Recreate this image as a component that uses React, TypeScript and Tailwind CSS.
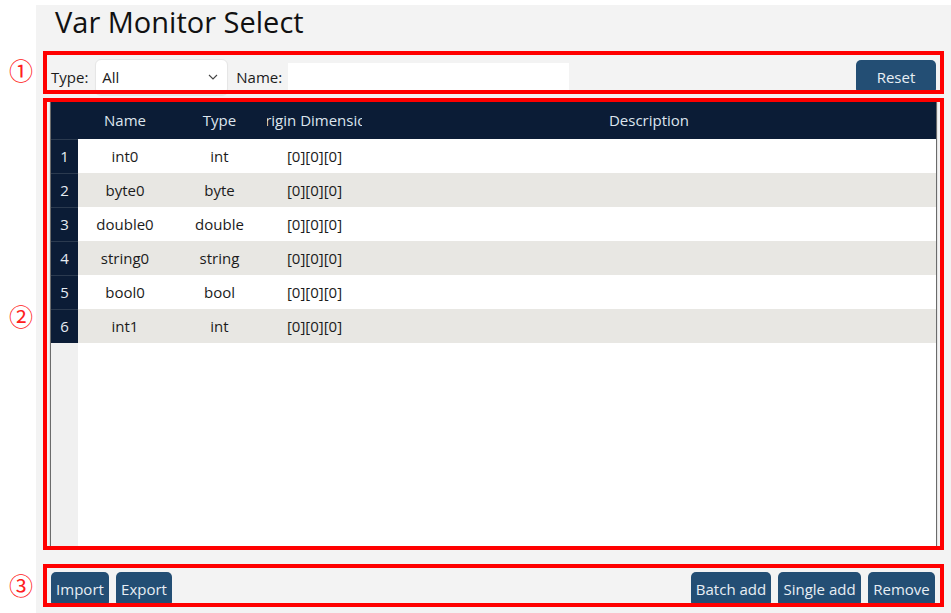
import React from "react";

const rows = [
  { name: "int0", type: "int", dim: "[0][0][0]" },
  { name: "byte0", type: "byte", dim: "[0][0][0]" },
  { name: "double0", type: "double", dim: "[0][0][0]" },
  { name: "string0", type: "string", dim: "[0][0][0]" },
  { name: "bool0", type: "bool", dim: "[0][0][0]" },
  { name: "int1", type: "int", dim: "[0][0][0]" },
];

function Btn({ label, w }: { label: string; w: string }) {
  return (
    <button
      className={`${w} h-[35px] rounded-[5px] bg-[#234e74] text-[15px] text-[#e8eef4] flex items-center justify-center`}
    >
      {label}
    </button>
  );
}

export default function App() {
  return (
    <div
      className="relative w-[951px] h-[613px] bg-white overflow-hidden text-[#1b1b1b]"
      style={{ fontFamily: '"Open Sans", "Noto Sans", sans-serif' }}
    >
      <div className="ml-[36px] mt-[5px] w-[915px] h-[608px] bg-[#f3f3f3] flex flex-col">
        {/* title */}
        <div className="h-[46px] pl-[19px] flex items-center">
          <h1 className="text-[29px] leading-none text-[#111] -mt-[14px]">Var Monitor Select</h1>
        </div>

        {/* toolbar */}
        <div className="h-[44px] pl-[15px] pr-[15px] flex items-center mt-[4px]">
          <span className="text-[15px] mr-[7px]">Type:</span>
          <div className="w-[133px] h-[36px] bg-white rounded-[6px] border border-[#e6e6e6] shadow-[0_1px_1px_rgba(0,0,0,0.06)] flex items-center justify-between pl-[6px] pr-[9px]">
            <span className="text-[15px]">All</span>
            <svg width="10" height="6" viewBox="0 0 10 6" fill="none">
              <polyline points="1,1 5,5 9,1" stroke="#444" strokeWidth="1.1" />
            </svg>
          </div>
          <span className="text-[15px] ml-[8px] mr-[6px]">Name:</span>
          <div className="w-[281px] h-[28px] bg-white" />
          <div className="flex-1" />
          <button className="w-[80px] h-[34px] rounded-[5px] bg-[#234e74] text-[15px] text-[#e8eef4] flex items-center justify-center">
            Reset
          </button>
        </div>

        {/* table */}
        <div className="mt-[2px] ml-[14px] w-[887px] h-[446px] border border-[#6b6b6b] shadow-[0_1px_1px_rgba(0,0,0,0.35)] flex flex-col bg-white">
          <div className="h-[37px] bg-[#0b1c36] flex text-[15px] text-[#dde5ee] shrink-0">
            <div className="w-[27px]" />
            <div className="w-[94px] flex items-center justify-center">Name</div>
            <div className="w-[95px] flex items-center justify-center">Type</div>
            <div className="w-[95px] flex items-center justify-center overflow-hidden whitespace-nowrap">
              Origin Dimension
            </div>
            <div className="flex-1 flex items-center justify-center">Description</div>
          </div>
          {rows.map((r, i) => (
            <div
              key={i}
              className={`h-[34px] flex text-[15px] shrink-0 ${i % 2 === 0 ? "bg-white" : "bg-[#e8e7e3]"}`}
            >
              <div className="w-[27px] bg-[#0b1c36] text-[#e6ecf2] border-t border-[#2b3a4f] flex items-center justify-center">
                {i + 1}
              </div>
              <div className="w-[94px] flex items-center justify-center">{r.name}</div>
              <div className="w-[95px] flex items-center justify-center">{r.type}</div>
              <div className="w-[95px] flex items-center justify-center">{r.dim}</div>
              <div className="flex-1" />
            </div>
          ))}
          <div className="flex-1 flex">
            <div className="w-[27px] bg-[#f0f0f0]" />
            <div className="flex-1 bg-white" />
          </div>
        </div>

        {/* bottom bar */}
        <div className="mt-[25px] pl-[15px] pr-[16px] flex items-center">
          <div className="flex gap-[7px]">
            <Btn label="Import" w="w-[58px]" />
            <Btn label="Export" w="w-[56px]" />
          </div>
          <div className="flex-1" />
          <div className="flex gap-[7px]">
            <Btn label="Batch add" w="w-[80px]" />
            <Btn label="Single add" w="w-[83px]" />
            <Btn label="Remove" w="w-[67px]" />
          </div>
        </div>
      </div>

      {/* annotation frames */}
      <div className="absolute left-[43px] top-[51px] w-[901px] h-[43px] border-4 border-[#ff0000] pointer-events-none" />
      <div className="absolute left-[43px] top-[98px] w-[901px] h-[452px] border-4 border-[#ff0000] pointer-events-none" />
      <div className="absolute left-[43px] top-[564px] w-[901px] h-[43px] border-4 border-[#ff0000] pointer-events-none" />

      <span
        className="absolute left-[9px] top-[58px] text-[24px] leading-none text-[#ff2020]"
        style={{ fontFamily: '"Noto Sans CJK SC", sans-serif' }}
      >
        ①
      </span>
      <span
        className="absolute left-[9px] top-[304px] text-[24px] leading-none text-[#ff2020]"
        style={{ fontFamily: '"Noto Sans CJK SC", sans-serif' }}
      >
        ②
      </span>
      <span
        className="absolute left-[9px] top-[573px] text-[24px] leading-none text-[#ff2020]"
        style={{ fontFamily: '"Noto Sans CJK SC", sans-serif' }}
      >
        ③
      </span>
    </div>
  );
}
